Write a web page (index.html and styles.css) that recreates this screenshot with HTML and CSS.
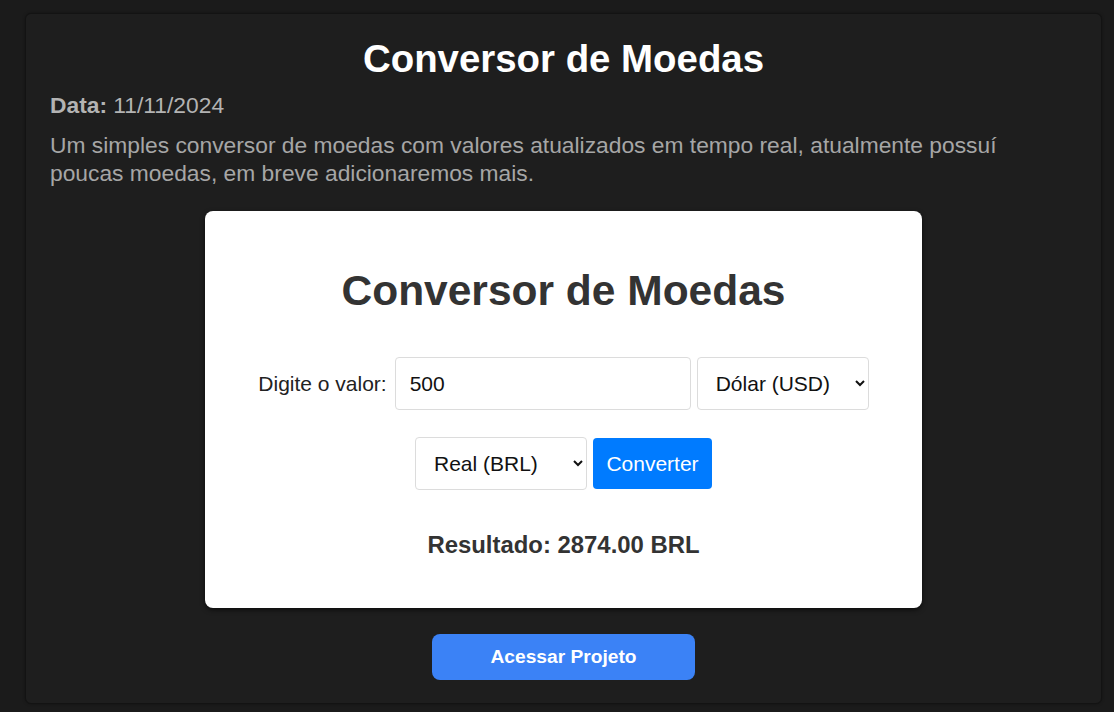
FILE: index.html
```html
<!DOCTYPE html>
<html lang="pt-BR">
<head>
<meta charset="utf-8">
<title>Conversor de Moedas</title>
<link rel="stylesheet" href="styles.css">
</head>
<body>
<main class="card">
  <h2 class="card-title">Conversor de Moedas</h2>
  <p class="meta"><strong>Data:</strong> 11/11/2024</p>
  <p class="desc">Um simples conversor de moedas com valores atualizados em tempo real, atualmente possuí poucas moedas, em breve adicionaremos mais.</p>
  <div class="preview">
    <h1 class="app-title">Conversor de Moedas</h1>
    <div class="row">
      <label class="label" for="valor">Digite o valor:</label>
      <input class="field input" id="valor" type="text" value="500">
      <select class="field select">
        <option>Dólar (USD)</option>
      </select>
    </div>
    <div class="row">
      <select class="field select">
        <option>Real (BRL)</option>
      </select>
      <button class="convert">Converter</button>
    </div>
    <p class="result">Resultado: 2874.00 BRL</p>
  </div>
  <a class="access" href="#">Acessar Projeto</a>
</main>
</body>
</html>
```

FILE: styles.css
```css
* { box-sizing: border-box; }
html, body { margin: 0; height: 100%; }
body {
  background: #1b1b1b;
  font-family: "Liberation Sans", Arial, sans-serif;
  padding: 13px 12px 8px 25px;
}
.card {
  background: #1e1e1e;
  border: 1px solid #131313;
  border-radius: 6px;
  width: 1077px;
  height: 691px;
  padding: 22px 24px 0 24px;
  display: flex;
  flex-direction: column;
  align-items: stretch;
  box-shadow: 0 0 3px rgba(0,0,0,0.35);
}
.card-title {
  margin: 0;
  color: #ffffff;
  font-size: 38.4px;
  font-weight: bold;
  text-align: center;
  line-height: 46px;
}
.meta {
  margin: 10px 0 0 0;
  color: #b3b3b3;
  font-size: 22.8px;
  line-height: 26px;
}
.meta strong { color: #b3b3b3; }
.desc {
  margin: 13px 0 0 0;
  padding-right: 40px;
  color: #a6a6a6;
  font-size: 22.8px;
  line-height: 28px;
}
.preview {
  align-self: center;
  width: 717px;
  height: 397px;
  margin-top: 24px;
  background: #ffffff;
  border-radius: 8px;
  box-shadow: 0 2px 5px rgba(0,0,0,0.6);
  padding-top: 55px;
  display: flex;
  flex-direction: column;
  align-items: center;
}
.app-title {
  margin: 0 0 41px 0;
  color: #333333;
  font-size: 42.5px;
  line-height: 50px;
  font-weight: bold;
}
.row {
  display: flex;
  align-items: center;
  gap: 6px;
  margin-bottom: 27px;
}
.label {
  color: #222;
  font-size: 21px;
  margin-right: 2px;
}
.field {
  height: 53px;
  border: 1px solid #dcdcdc;
  border-radius: 4px;
  background: #fff;
  font-family: "Liberation Sans", Arial, sans-serif;
  font-size: 21px;
  color: #111;
}
.input {
  width: 296px;
  padding: 0 14px;
}
.select {
  width: 172px;
  padding: 0 12px 0 14px;
}
.convert {
  height: 51px;
  width: 119px;
  background: #007bff;
  border: none;
  border-radius: 4px;
  color: #fff;
  font-family: "Liberation Sans", Arial, sans-serif;
  font-size: 21px;
  padding: 0;
}
.result {
  margin: 14px 0 0 0;
  color: #333;
  font-size: 23.9px;
  line-height: 28px;
  font-weight: bold;
}
.access {
  align-self: center;
  margin-top: 26px;
  width: 263px;
  height: 46px;
  background: #3b82f6;
  color: #fff;
  border-radius: 8px;
  font-size: 19.2px;
  font-weight: bold;
  text-decoration: none;
  display: flex;
  align-items: center;
  justify-content: center;
}
```
